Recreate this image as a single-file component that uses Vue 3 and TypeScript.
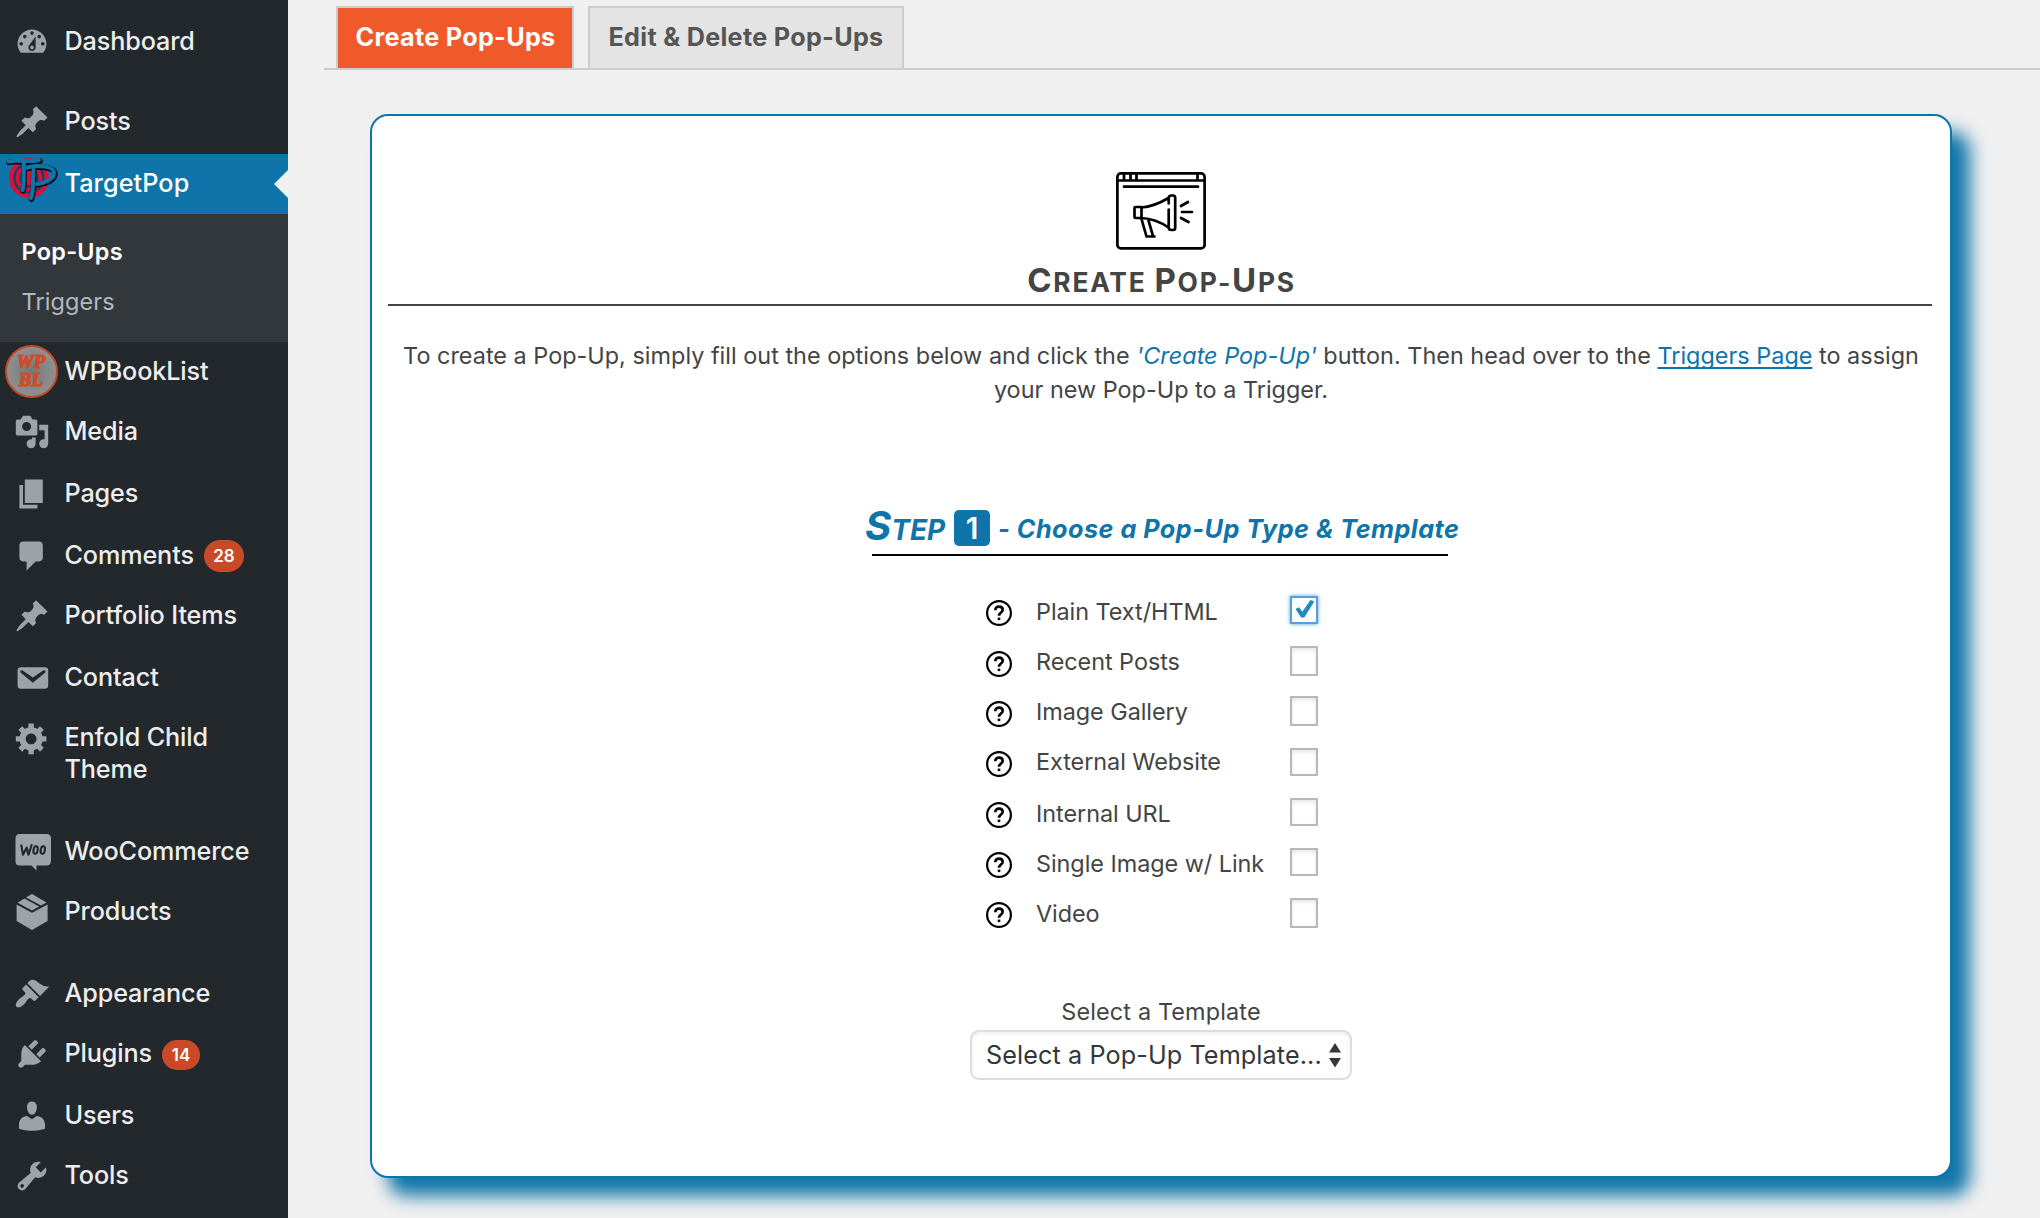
<script setup lang="ts">
import { ref } from 'vue'

interface MenuItem {
  label: string
  icon: string
  height: number
  gap?: number
  badge?: string
  current?: boolean
}

const icons: Record<string, string> = {
  dashboard:
    'M3.76 16h12.48c1.1-1.37 1.76-3.11 1.76-5 0-4.42-3.58-8-8-8s-8 3.58-8 8c0 1.89.66 3.63 1.76 5zM10 4c.55 0 1 .45 1 1s-.45 1-1 1-1-.45-1-1 .45-1 1-1zM6 6c.55 0 1 .45 1 1s-.45 1-1 1-1-.45-1-1 .45-1 1-1zm8 0c.55 0 1 .45 1 1s-.45 1-1 1-1-.45-1-1 .45-1 1-1zm-5.37 5.55L12 7v6c0 1.1-.9 2-2 2s-2-.9-2-2c0-.57.24-1.08.63-1.45zM4 10c.55 0 1 .45 1 1s-.45 1-1 1-1-.45-1-1 .45-1 1-1zm12 0c.55 0 1 .45 1 1s-.45 1-1 1-1-.45-1-1 .45-1 1-1zm-5 3c0-.55-.45-1-1-1s-1 .45-1 1 .45 1 1 1 1-.45 1-1z',
  pin: 'M10.44 3.02l1.82-1.82 6.36 6.35-1.83 1.82c-1.05-.68-2.48-.57-3.41.36l-.75.75c-.92.93-1.04 2.35-.35 3.41l-1.83 1.82-2.41-2.41-2.8 2.79c-.42.42-3.38 2.71-3.8 2.29s1.86-3.39 2.28-3.81l2.79-2.79L4.1 9.36l1.83-1.82c1.05.69 2.48.57 3.4-.36l.75-.75c.93-.92 1.05-2.35.36-3.41z',
  media:
    'M13 11V4c0-.55-.45-1-1-1h-1.67L9 1H5L3.67 3H2c-.55 0-1 .45-1 1v7c0 .55.45 1 1 1h10c.55 0 1-.45 1-1zM7 4.5c1.38 0 2.5 1.12 2.5 2.5S8.38 9.5 7 9.5 4.5 8.38 4.5 7 5.62 4.5 7 4.5zM14 6h5v10.5c0 1.38-1.12 2.5-2.5 2.5S14 17.88 14 16.5s1.12-2.5 2.5-2.5c.17 0 .34.02.5.05V9h-3V6zm-4 8.05V13h2v3.5c0 1.38-1.12 2.5-2.5 2.5S7 17.88 7 16.5 8.12 14 9.5 14c.17 0 .34.02.5.05z',
  pages: 'M6 15V2h10v13H6zm-1 1h8v2H3V5h2v11z',
  comments: 'M5 2h9c1.1 0 2 .9 2 2v7c0 1.1-.9 2-2 2h-2l-5 5v-5H5c-1.1 0-2-.9-2-2V4c0-1.1.9-2 2-2z',
  email:
    'M3.87 4h13.25C18.37 4 19 4.59 19 5.79v8.42c0 1.19-.63 1.79-1.88 1.79H3.87c-1.25 0-1.88-.6-1.88-1.79V5.79c0-1.2.63-1.79 1.88-1.79zm6.62 8.6l6.74-5.53c.24-.2.43-.66.13-1.07-.29-.41-.82-.42-1.17-.17l-5.7 3.86L4.8 5.83c-.35-.25-.88-.24-1.17.17-.3.41-.11.87.13 1.07z',
  gear: 'M18 12h-2.18c-.17.7-.44 1.35-.81 1.93l1.54 1.54-2.1 2.1-1.54-1.54c-.58.36-1.23.63-1.91.79V19H8v-2.18c-.68-.16-1.33-.43-1.91-.79l-1.54 1.54-2.12-2.12 1.54-1.54c-.36-.58-.63-1.23-.79-1.91H1V9.03h2.17c.16-.7.44-1.35.8-1.94L2.43 5.55l2.1-2.1 1.54 1.54c.58-.37 1.24-.64 1.93-.81V2h3v2.18c.68.16 1.33.43 1.91.79l1.54-1.54 2.12 2.12-1.54 1.54c.36.59.64 1.24.8 1.94H18V12zm-8.5 1.5c1.66 0 3-1.34 3-3s-1.34-3-3-3-3 1.34-3 3 1.34 3 3 3z',
  brush:
    'M14.48 11.06L7.41 3.99l1.5-1.5c.5-.56 2.3-.47 3.51.32 1.21.8 1.43 1.28 2.91 2.1 1.18.64 2.45 1.26 4.45.85zm-.71.71L6.7 4.7 4.93 6.47c-.39.39-.39 1.02 0 1.41l1.06 1.06c.39.39.39 1.03 0 1.42-.6.6-1.43 1.11-2.21 1.69-.35.26-.7.53-1.01.84C1.43 14.23.4 16.08 1.4 17.07c.99 1 2.84-.03 4.18-1.36.31-.31.58-.66.85-1.02.57-.78 1.08-1.61 1.69-2.21.39-.39 1.02-.39 1.41 0l1.06 1.06c.39.39 1.02.39 1.41 0z',
  plug: 'M13.11 4.36L9.87 7.6 8 5.73l3.24-3.24c.35-.34 1.05-.2 1.56.32.52.51.66 1.21.31 1.55zm-8 1.77l.91-1.12 9.01 9.01-1.19.84c-.71.71-2.63 1.16-3.82 1.16H6.14L4.9 17.26c-.59.59-1.54.59-2.12 0-.59-.58-.59-1.53 0-2.12l1.24-1.24v-3.88c0-1.13.4-3.19 1.09-3.89zm7.26 3.97l3.24-3.24c.34-.35 1.04-.21 1.55.31.52.51.66 1.21.31 1.55l-3.24 3.25z',
  user: 'M10 9.25c-2.27 0-2.73-3.44-2.73-3.44C7 4.02 7.82 2 9.97 2c2.16 0 2.98 2.02 2.71 3.81 0 0-.41 3.44-2.68 3.44zm0 2.57L12.72 10c2.39 0 4.52 2.33 4.52 4.53v2.49s-3.65 1.13-7.24 1.13c-3.65 0-7.24-1.13-7.24-1.13v-2.49c0-2.25 1.94-4.48 4.47-4.48z',
  wrench:
    'M16.68 9.77c-1.34 1.34-3.3 1.67-4.95.99l-5.41 6.52c-.99.99-2.59.99-3.58 0s-.99-2.59 0-3.57l6.52-5.42c-.68-1.65-.35-3.61.99-4.95 1.28-1.28 3.12-1.62 4.72-1.06l-2.89 2.89 2.82 2.82 2.86-2.87c.53 1.58.18 3.39-1.08 4.65zM3.81 16.21c.4.39 1.04.39 1.43 0 .4-.4.4-1.04 0-1.43-.39-.4-1.03-.4-1.43 0-.39.39-.39 1.03 0 1.43z',
}

const menu: MenuItem[] = [
  { label: 'Dashboard', icon: 'dashboard', height: 60, gap: 20 },
  { label: 'Posts', icon: 'pin', height: 62 },
  { label: 'TargetPop', icon: 'targetpop', height: 60, current: true },
  { label: 'WPBookList', icon: 'wpbooklist', height: 60 },
  { label: 'Media', icon: 'media', height: 62 },
  { label: 'Pages', icon: 'pages', height: 62 },
  { label: 'Comments', icon: 'comments', height: 60, badge: '28' },
  { label: 'Portfolio Items', icon: 'pin', height: 62 },
  { label: 'Contact', icon: 'email', height: 60 },
  { label: 'Enfold Child Theme', icon: 'gear', height: 92, gap: 22 },
  { label: 'WooCommerce', icon: 'woo', height: 60 },
  { label: 'Products', icon: 'box', height: 62, gap: 20 },
  { label: 'Appearance', icon: 'brush', height: 60 },
  { label: 'Plugins', icon: 'plug', height: 62, badge: '14' },
  { label: 'Users', icon: 'user', height: 60 },
  { label: 'Tools', icon: 'wrench', height: 72 },
]

const types = ref([
  { label: 'Plain Text/HTML', height: 50, checked: true },
  { label: 'Recent Posts', height: 50, checked: false },
  { label: 'Image Gallery', height: 50, checked: false },
  { label: 'External Website', height: 52, checked: false },
  { label: 'Internal URL', height: 50, checked: false },
  { label: 'Single Image w/ Link', height: 50, checked: false },
  { label: 'Video', height: 50, checked: false },
])
</script>

<template>
  <div class="page">
    <nav class="sidebar">
      <template v-for="item in menu" :key="item.label">
        <a
          class="item"
          :class="{ current: item.current }"
          :style="{ height: item.height + 'px', marginBottom: (item.gap ?? 0) + 'px' }"
        >
          <svg v-if="item.icon === 'targetpop'" class="logo" viewBox="0 0 60 60">
            <circle cx="29" cy="24" r="20" fill="#d8103a" />
            <circle cx="29" cy="24" r="14.500" fill="none" stroke="#0f4468" stroke-width="2.400" />
            <circle cx="29" cy="24" r="8.500" fill="none" stroke="#0f4468" stroke-width="2.400" />
            <g fill="none" stroke-linecap="round" stroke-linejoin="round">
              <g stroke="#07131d" stroke-width="5.600">
                <path d="M9 8.500c10-2.500 20 1.500 31-1.500M24.500 9c-1 10 1 18-1.500 28" />
                <path d="M34 17c-1.500 10 1 18-2.500 28M27 14.500c14-3 27.500-1 28 5 .5 7-10 10.500-18 11.500" />
              </g>
              <g stroke="#1273a8" stroke-width="4">
                <path d="M8.500 7.500c10-2.500 20 1.500 30.500-1.500M24 8c-1 10 1 18-1.500 28" />
                <path d="M33.500 16c-1.500 10 1 18-2.500 28M27 13.500c14-3 26.500-1 27 5 .5 7-10 10.500-17 11.500" />
              </g>
            </g>
          </svg>
          <span v-else-if="item.icon === 'wpbooklist'" class="wpbl">WP<br />BL</span>
          <span v-else-if="item.icon === 'woo'" class="woo">
            <svg viewBox="0 0 36 38">
              <path d="M4.500 0h27Q36 0 36 4.500v22Q36 31.500 31.500 31.500H21.500V36.500L16.500 31.500H4.500Q.5 31.500.5 27V4.500Q.5 0 4.500 0z" fill="#9ea3a8" />
              <g fill="none" stroke="#23282d" stroke-width="2.100" stroke-linecap="round" stroke-linejoin="round">
                <path d="M6.300 11.300L8 20.800l3.700-7.300 1.700 7.300L16.600 11" />
                <ellipse cx="20.600" cy="16" rx="2.100" ry="3.800" transform="rotate(10 20.600 16)" />
                <ellipse cx="27.800" cy="16" rx="2.100" ry="3.800" transform="rotate(10 27.800 16)" />
              </g>
            </svg>
          </span>
          <svg v-else-if="item.icon === 'box'" class="icon" viewBox="0 0 36 36">
            <path d="M2.600 10.500L18 18.700l15.600-8.200V27L18 36 2.600 27z" fill="#9ea3a8" />
            <path d="M18 0l14.500 8.600L27 11.600 12 3.400zM10.300 4.400L25.200 12.600 18 16.600 3.600 8.700z" fill="#9ea3a8" />
          </svg>
          <svg v-else class="icon" viewBox="0 0 20 20"><path :d="icons[item.icon]" /></svg>
          <span class="name">{{ item.label }}</span>
          <span v-if="item.badge" class="badge" :class="'b' + item.badge">{{ item.badge }}</span>
        </a>
        <div v-if="item.current" class="submenu">
          <a class="active">Pop-Ups</a>
          <a>Triggers</a>
        </div>
      </template>
    </nav>

    <main class="content">
      <div class="tabs">
        <a class="tab on">Create Pop-Ups</a>
        <a class="tab">Edit &amp; Delete Pop-Ups</a>
      </div>

      <section class="card">
        <svg class="promo" viewBox="0 0 90 78" fill="none" stroke="#000" stroke-width="2.700" stroke-linecap="round" stroke-linejoin="round">
          <rect x="1.400" y="1.400" width="87.200" height="75" rx="3.500" />
          <path d="M1.400 8.500h87.200M8 2v6M14.500 2v6M20.500 2v6M81.500 2v6M8 14.700h74" />
          <path d="M19.500 35h6v11h-6q-1 0-1-1v-9q0-1 1-1zM25.500 35.500C34 35 44 31 52.500 26M25.500 46c9 .5 19 4 27 9.500M52.700 31.500v-5.500q0-2.500 3-2.500h1.500q2 0 2 2.500v29.500q0 2.500-2 2.500h-1.500q-3 0-3-2.500V37.500M25.500 47L30.500 64.500h8M32.500 48.500L37 64M65 34l7-4M66 40h10M65 46l7.500 4" />
        </svg>
        <h1 class="title"><b>C</b>reate <b>P</b>op-<b>U</b>ps</h1>
        <p class="intro">
          To create a Pop-Up, simply fill out the options below and click the
          <em>'Create Pop-Up'</em> button. Then head over to the <a>Triggers Page</a> to assign<br />
          your new Pop-Up to a Trigger.
        </p>

        <div class="step">
          <span class="word"><b>S</b>tep</span>
          <span class="num">1</span>
          <span class="what">- Choose a Pop-Up Type &amp; Template</span>
        </div>

        <div class="types">
          <label v-for="(t, i) in types" :key="t.label" class="type" :style="{ height: t.height + 'px' }">
            <svg class="help" :class="{ low: i > 0 && i < 4 }" viewBox="0 0 26 26" fill="none" stroke="#000">
              <circle cx="13" cy="13" r="11.900" stroke-width="2.200" />
              <path d="M9.300 10.300C9.300 7.700 10.900 6.600 13 6.600s3.700 1.300 3.700 3.300c0 2.600-3.700 2.900-3.700 5.900" stroke-width="2.600" />
              <path d="M13 17.600v2.500" stroke-width="2.600" />
            </svg>
            <span class="tname">{{ t.label }}</span>
            <span
              class="check"
              :class="{ checked: t.checked, tall: i === 1 || i === 2 || i === 6, low: i === 3 }"
              @click="t.checked = !t.checked"
            >
              <svg v-if="t.checked" viewBox="0 0 24 24"><path d="M3.500 11L7 9.300 10.300 13.800 18.500 2 22.300 3.500 12.300 19.500H9z" fill="#1e8cbe" /></svg>
            </span>
          </label>
        </div>

        <div class="tpl">Select a Template</div>
        <div class="select">
          <span>Select a Pop-Up Template...</span>
          <svg viewBox="0 0 12 25"><path d="M6 0l6 9.500H0zM0 15h12L6 24.500z" fill="#32373c" /></svg>
        </div>
      </section>
    </main>
  </div>
</template>

<style>
html,
body {
  margin: 0;
  overflow: hidden;
  background: #f1f1f1;
}
</style>

<style scoped>
.page {
  display: flex;
  height: 1218px;
  overflow: hidden;
  font-family: Inter, sans-serif;
  font-size: 23.4px;
  color: #444;
  background: #f0f0f0;
}
.sidebar {
  width: 288px;
  flex: none;
  box-sizing: border-box;
  padding-top: 12px;
  background: #23282d;
}
.item {
  position: relative;
  display: flex;
  align-items: flex-start;
  box-sizing: border-box;
  color: #eee;
}
.icon {
  width: 36px;
  height: 36px;
  margin: 12px 0 0 14.4px;
  fill: #9ea3a8;
  flex: none;
}
.name {
  position: absolute;
  left: 64.5px;
  top: 13px;
  width: 190px;
  font-size: 25.2px;
  font-weight: 450;
  letter-spacing: -0.12px;
  line-height: 32px;
}
.current {
  background: #0f74a9;
  color: #fff;
}
.current .name {
  letter-spacing: 0.1px;
}
.current::after {
  content: '';
  position: absolute;
  right: 0;
  top: 16px;
  border: 14px solid transparent;
  border-left: 0;
  border-right-color: #f0f0f0;
}
.logo {
  width: 60px;
  height: 60px;
}
.wpbl {
  width: 53px;
  height: 53px;
  margin: 2.5px 0 0 4.5px;
  padding-top: 6px;
  box-sizing: border-box;
  border: 2px solid #bf4a25;
  border-radius: 50%;
  background: radial-gradient(circle, #757879, #98999a);
  color: #cc4d27;
  font: italic 700 19px/18px 'Liberation Serif', serif;
  -webkit-text-stroke: 1.2px #cc4d27;
  text-align: center;
}
.woo {
  margin: 12px 0 0 14.5px;
}
.woo svg {
  display: block;
  width: 36px;
  height: 38px;
}
.badge {
  position: absolute;
  top: 14px;
  left: 204px;
  width: 40px;
  height: 32px;
  border-radius: 16px;
  background: #ca4a28;
  color: #fff;
  font-size: 17px;
  font-weight: 600;
  line-height: 32px;
  text-align: center;
}
.b14 {
  top: 16px;
  left: 162px;
  width: 38px;
  height: 30px;
  line-height: 31px;
}
.submenu {
  height: 128px;
  box-sizing: border-box;
  padding: 13px 0 0 21.5px;
  background: #32373c;
  color: #b4b9be;
}
.submenu a {
  display: block;
  height: 50px;
  line-height: 50px;
  letter-spacing: 0.15px;
}
.submenu .active {
  color: #fff;
  font-weight: 600;
  letter-spacing: 0.3px;
}

.content {
  flex: 1;
  padding: 6px 0 0 36px;
}
.tabs {
  display: flex;
  gap: 14px;
  height: 62px;
  padding-left: 12px;
  border-bottom: 2px solid #ccc;
}
.tab {
  box-sizing: border-box;
  width: 238px;
  height: 62px;
  border: 2px solid #ccc;
  border-bottom: 0;
  background: #e4e4e4;
  color: #555;
  font-size: 25.2px;
  font-weight: 650;
  letter-spacing: 0.3px;
  line-height: 58px;
  text-align: center;
  text-indent: 1px;
  white-space: nowrap;
}
.tab + .tab {
  width: 316px;
  text-indent: 0;
}
.tab.on {
  background: #f05a2a;
  color: #fff;
}
.card {
  box-sizing: border-box;
  width: 1582px;
  height: 1064px;
  margin: 44px 0 0 46px;
  padding: 56px 16px 0;
  display: flex;
  flex-direction: column;
  align-items: center;
  border: 2px solid #0f74a9;
  border-radius: 18px;
  background: #fff;
  box-shadow: 18px 18px 18px #1176ab;
}
.promo {
  width: 90px;
  height: 78px;
  flex: none;
}
.title {
  align-self: stretch;
  height: 54px;
  box-sizing: content-box;
  margin: 0 2px 0 0;
  border-bottom: 2px solid #444;
  font-size: 26.4px;
  font-weight: 700;
  line-height: 60px;
  letter-spacing: 1.75px;
  text-align: center;
  text-indent: 3px;
  text-transform: uppercase;
}
.title b {
  font-size: 33px;
  font-weight: 700;
}
.intro {
  margin: 33px 0 0;
  line-height: 34px;
  text-align: center;
  letter-spacing: 0.02px;
  white-space: nowrap;
}
.intro em,
.intro a {
  color: #0f74a9;
}
.intro a {
  text-decoration: underline;
  text-decoration-thickness: 2px;
  text-underline-offset: 3px;
  text-decoration-skip-ink: none;
}
.step {
  width: 576px;
  height: 48px;
  margin: 99px 2px 0 0;
  display: flex;
  align-items: flex-start;
  border-bottom: 2px solid #000;
  color: #0f74a9;
  font-style: italic;
  font-weight: 700;
  white-space: nowrap;
}
.word {
  width: 83px;
  flex: none;
  margin: -5px 6px 0 -7px;
  font-size: 28px;
  line-height: 50px;
  text-transform: uppercase;
}
.word b {
  font-size: 40px;
  font-weight: 700;
}
.num {
  width: 36px;
  height: 36px;
  flex: none;
  margin: 4px 8px 0 0;
  border-radius: 5px;
  background: #0f74a9;
  color: #fff;
  font-style: normal;
  font-weight: 600;
  font-size: 30px;
  line-height: 36px;
  text-align: center;
}
.what {
  font-size: 25.2px;
  letter-spacing: 0.5px;
  line-height: 46px;
}
.types {
  margin: 32px 18px 0 0;
  width: 332px;
}
.type {
  display: flex;
  align-items: flex-start;
}
.help {
  width: 26px;
  height: 26px;
  flex: none;
  margin: 12px 24px 0 0;
}
.help.low {
  margin-top: 13px;
}
.tname {
  width: 254px;
  flex: none;
  line-height: 48px;
  letter-spacing: -0.04px;
  white-space: nowrap;
}
.check {
  width: 28px;
  height: 28px;
  flex: none;
  margin-top: 8px;
  box-sizing: border-box;
  border: 2px solid #b4b9be;
  background: #fff;
  box-shadow: inset 0 2px 4px rgba(0, 0, 0, 0.1);
}
.check.low {
  margin-top: 10px;
}
.tall {
  height: 30px;
}
.checked {
  border-color: #5b9dd9;
  box-shadow: 0 0 4px rgba(30, 140, 190, 0.8);
}
.check svg {
  display: block;
  width: 24px;
  height: 24px;
}
.tpl {
  margin-top: 57px;
  line-height: 30px;
  letter-spacing: 0.15px;
}
.select {
  box-sizing: border-box;
  width: 382px;
  height: 50px;
  margin-top: 3px;
  padding: 0 9px 0 14px;
  display: flex;
  align-items: center;
  justify-content: space-between;
  border: 2px solid #ddd;
  border-radius: 9px;
  box-shadow: inset 0 2px 4px rgba(0, 0, 0, 0.07);
  color: #32373c;
  font-size: 25.2px;
  letter-spacing: 0.1px;
}
.select svg {
  width: 12px;
  height: 25px;
}
</style>
